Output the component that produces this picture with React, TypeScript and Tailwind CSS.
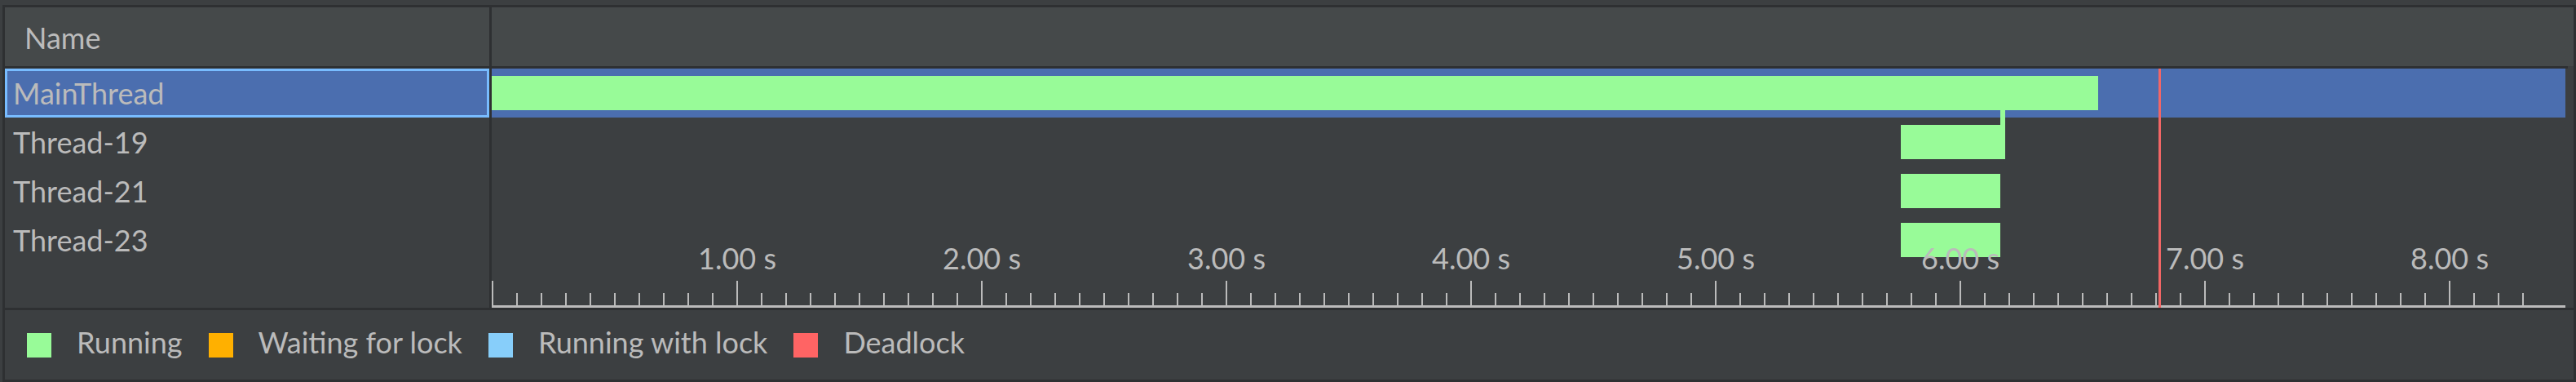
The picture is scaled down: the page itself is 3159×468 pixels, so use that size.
import React from 'react';

// timeline scale: 300px per second, minor tick every 0.1s
const PX_PER_SEC = 300;
const TICK_COUNT = 84;

interface Bar {
  start: number;
  end: number;
}

interface ThreadRow {
  name: string;
  selected?: boolean;
  bars: Bar[];
}

const threads: ThreadRow[] = [
  { name: 'MainThread', selected: true, bars: [{ start: 0, end: 1970 }] },
  { name: 'Thread-19', bars: [{ start: 1728, end: 1856 }] },
  { name: 'Thread-21', bars: [{ start: 1728, end: 1850 }] },
  { name: 'Thread-23', bars: [{ start: 1728, end: 1850 }] },
];

const legend = [
  { label: 'Running', color: 'bg-[#98fb98]' },
  { label: 'Waiting for lock', color: 'bg-[#ffb000]' },
  { label: 'Running with lock', color: 'bg-[#87cefa]' },
  { label: 'Deadlock', color: 'bg-[#ff6464]' },
];

const App: React.FC = () => {
  return (
    <div className="w-[3159px] h-[468px] bg-[#3c3f41] pt-[6px] pl-[3px] font-[Lato,sans-serif] text-[#bbbbbb] overflow-hidden">
      <div className="h-[462px] border-[3px] border-[#2e3032] flex flex-col">
        {/* header */}
        <div className="h-[72px] flex shrink-0 bg-[#45494a]">
          <div className="w-[594px] flex items-center pl-[24px] pt-[2px] text-[36px] leading-none">Name</div>
          <div className="w-[3px] bg-[#2e3032]" />
          <div className="flex-1" />
        </div>
        <div className="h-[3px] bg-[#2e3032] shrink-0 mr-[7px]" />

        {/* body */}
        <div className="h-[293px] flex shrink-0">
          {/* names */}
          <div className="w-[594px] flex flex-col">
            {threads.map((t) =>
              t.selected ? (
                <div
                  key={t.name}
                  className="h-[60px] flex items-center pl-[7px] bg-[#4b6eaf] border-[3px] border-[#78bcff] text-[36px] leading-none"
                >
                  {t.name}
                </div>
              ) : (
                <div key={t.name} className="h-[60px] flex items-center pl-[10px] text-[36px] leading-none">
                  {t.name}
                </div>
              )
            )}
          </div>
          <div className="w-[3px] bg-[#2e3032]" />

          {/* timeline */}
          <div className="flex-1 relative flex flex-col">
            {threads.map((t) => (
              <div key={t.name} className={`h-[60px] relative ${t.selected ? 'bg-[#4b6eaf]' : ''}`}>
                {t.bars.map((b, i) => (
                  <div
                    key={i}
                    className="absolute top-[9px] h-[42px] bg-[#98fb98]"
                    style={{ left: b.start, width: b.end - b.start }}
                  />
                ))}
              </div>
            ))}
            {/* connector from MainThread to Thread-19 */}
            <div className="absolute left-[1850px] top-[51px] w-[6px] h-[18px] bg-[#98fb98]" />

            {/* axis */}
            <div className="flex-1 relative">
              {Array.from({ length: TICK_COUNT }).map((_, i) => (
                <div
                  key={i}
                  className={`absolute bottom-[3px] w-[2px] bg-[#bbbbbb] ${i % 10 === 0 ? 'h-[30px]' : 'h-[15px]'}`}
                  style={{ left: i * 30 }}
                />
              ))}
              {[1, 2, 3, 4, 5, 6, 7, 8].map((s) => (
                <div
                  key={s}
                  className="absolute top-[-26px] -translate-x-1/2 text-[36px] leading-none whitespace-nowrap z-10"
                  style={{ left: s * PX_PER_SEC + 1 }}
                >
                  {s}.00 s
                </div>
              ))}
              <div className="absolute left-0 right-0 bottom-0 h-[3px] bg-[#bbbbbb]" />
            </div>

            {/* current time marker */}
            <div className="absolute top-0 bottom-0 left-[2044px] w-[3px] bg-[#f26666] z-20" />
          </div>
          <div className="w-[10px]" />
        </div>
        <div className="h-[3px] bg-[#2e3032] shrink-0" />

        {/* legend */}
        <div className="flex-1 flex items-center pl-[27px]">
          {legend.map((l, i) => (
            <div key={l.label} className={`flex items-center ${i > 0 ? 'ml-[32px]' : ''}`}>
              <div className={`w-[30px] h-[30px] ${l.color}`} />
              <span className="ml-[31px] text-[36px] leading-none mb-[8px]">{l.label}</span>
            </div>
          ))}
        </div>
      </div>
    </div>
  );
};

export default App;
